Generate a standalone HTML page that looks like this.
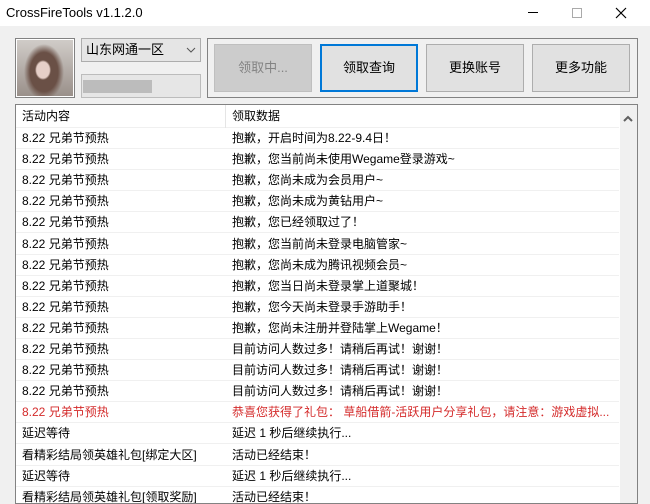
<!DOCTYPE html>
<html><head><meta charset="utf-8"><style>
*{margin:0;padding:0;box-sizing:border-box}
body{width:650px;height:502px;background:#f0f0f0;font-family:"Liberation Sans","Noto Sans CJK SC",sans-serif;font-size:12px;color:#000;position:relative;overflow:hidden}
.abs{position:absolute}
.title{left:0;top:0;width:650px;height:26px;background:#fff}
.title span{position:absolute;left:6px;top:5px;font-size:13px}
.btn{position:absolute;top:44px;width:98px;height:48px;background:#e1e1e1;border:1px solid #adadad;text-align:center;line-height:46px;font-size:13px}
.list{left:15px;top:104px;width:623px;height:400px;background:#fff;border:1px solid #828282;overflow:hidden}
.row{position:absolute;left:0;width:603px;height:21px;border-bottom:1px solid #f0f0f0;line-height:20px;font-size:12px}
.row .a{position:absolute;left:6px}
.row .b{position:absolute;left:216px}
.red{color:#d42b2b}
</style></head><body>
<div class="abs title"><span>CrossFireTools v1.1.2.0</span>
<div class="abs" style="left:528px;top:12px;width:10px;height:1px;background:#000"></div>
<div class="abs" style="left:572px;top:8px;width:10px;height:10px;border:1px solid #aaa"></div>
<svg class="abs" style="left:615px;top:7px" width="12" height="12"><path d="M1 1L11 11M11 1L1 11" stroke="#000" stroke-width="1.2"/></svg>
</div>
<div class="abs" style="left:15px;top:38px;width:60px;height:60px;border:1px solid #828282;background:#fff;padding:1px">
<div style="width:100%;height:100%;background:radial-gradient(ellipse 8px 10px at 26px 30px,#e6cfc8 80%,transparent 100%),radial-gradient(ellipse 20px 28px at 27px 32px,#6a5046 70%,transparent 100%),linear-gradient(#d0ccc8,#9a908a)"></div></div>
<div class="abs" style="left:81px;top:38px;width:120px;height:24px;background:#e5e5e5;border:1px solid #adadad;font-size:13px;line-height:22px;padding-left:4px">山东网通一区
<svg class="abs" style="left:104px;top:8px" width="10" height="6"><path d="M1 1L5 5L9 1" stroke="#555" fill="none"/></svg></div>
<div class="abs" style="left:81px;top:74px;width:120px;height:24px;background:#e6e6e6;border:1px solid #bcbcbc"><div style="position:absolute;left:1px;top:5px;width:69px;height:13px;background:#bcbcbc"></div></div>
<div class="abs" style="left:207px;top:38px;width:431px;height:60px;border:1px solid #828282"></div>
<div class="btn" style="left:214px;background:#ccc;border-color:#bfbfbf;color:#838383">领取中...</div>
<div class="btn" style="left:320px;border:2px solid #0078d7;line-height:44px">领取查询</div>
<div class="btn" style="left:426px">更换账号</div>
<div class="btn" style="left:532px">更多功能</div>
<div class="abs list">
<div class="abs" style="left:0;top:0;width:603px;height:23px;border-bottom:1px solid #f0f0f0;line-height:22px"><span class="abs" style="left:6px">活动内容</span><span class="abs" style="left:216px">领取数据</span></div>
<div class="abs" style="left:209px;top:0;width:1px;height:23px;background:#e5e5e5"></div>
<div class="abs" style="left:604px;top:0;width:17px;height:400px;background:#f0f0f0"></div>
<svg class="abs" style="left:607px;top:10px" width="10" height="8"><path d="M1 6L5 2L9 6" stroke="#606060" stroke-width="2" fill="none"/></svg>
<div id="rows"></div>
</div>
<script>
var d=[["8.22 兄弟节预热","抱歉，开启时间为8.22-9.4日！"],["8.22 兄弟节预热","抱歉，您当前尚未使用Wegame登录游戏~"],["8.22 兄弟节预热","抱歉，您尚未成为会员用户~"],["8.22 兄弟节预热","抱歉，您尚未成为黄钻用户~"],["8.22 兄弟节预热","抱歉，您已经领取过了！"],["8.22 兄弟节预热","抱歉，您当前尚未登录电脑管家~"],["8.22 兄弟节预热","抱歉，您尚未成为腾讯视频会员~"],["8.22 兄弟节预热","抱歉，您当日尚未登录掌上道聚城！"],["8.22 兄弟节预热","抱歉，您今天尚未登录手游助手！"],["8.22 兄弟节预热","抱歉，您尚未注册并登陆掌上Wegame！"],["8.22 兄弟节预热","目前访问人数过多！请稍后再试！谢谢！"],["8.22 兄弟节预热","目前访问人数过多！请稍后再试！谢谢！"],["8.22 兄弟节预热","目前访问人数过多！请稍后再试！谢谢！"],["8.22 兄弟节预热","恭喜您获得了礼包： 草船借箭-活跃用户分享礼包，请注意：游戏虚拟...",1],["延迟等待","延迟 1 秒后继续执行..."],["看精彩结局领英雄礼包[绑定大区]","活动已经结束！"],["延迟等待","延迟 1 秒后继续执行..."],["看精彩结局领英雄礼包[领取奖励]","活动已经结束！"]];
var h="";d.forEach(function(r,i){h+='<div class="row'+(r[2]?' red':'')+'" style="top:'+(23+i*21.1)+'px"><span class="a">'+r[0]+'</span><span class="b">'+r[1]+'</span></div>'});
document.getElementById("rows").innerHTML=h;
</script>
</body></html>
